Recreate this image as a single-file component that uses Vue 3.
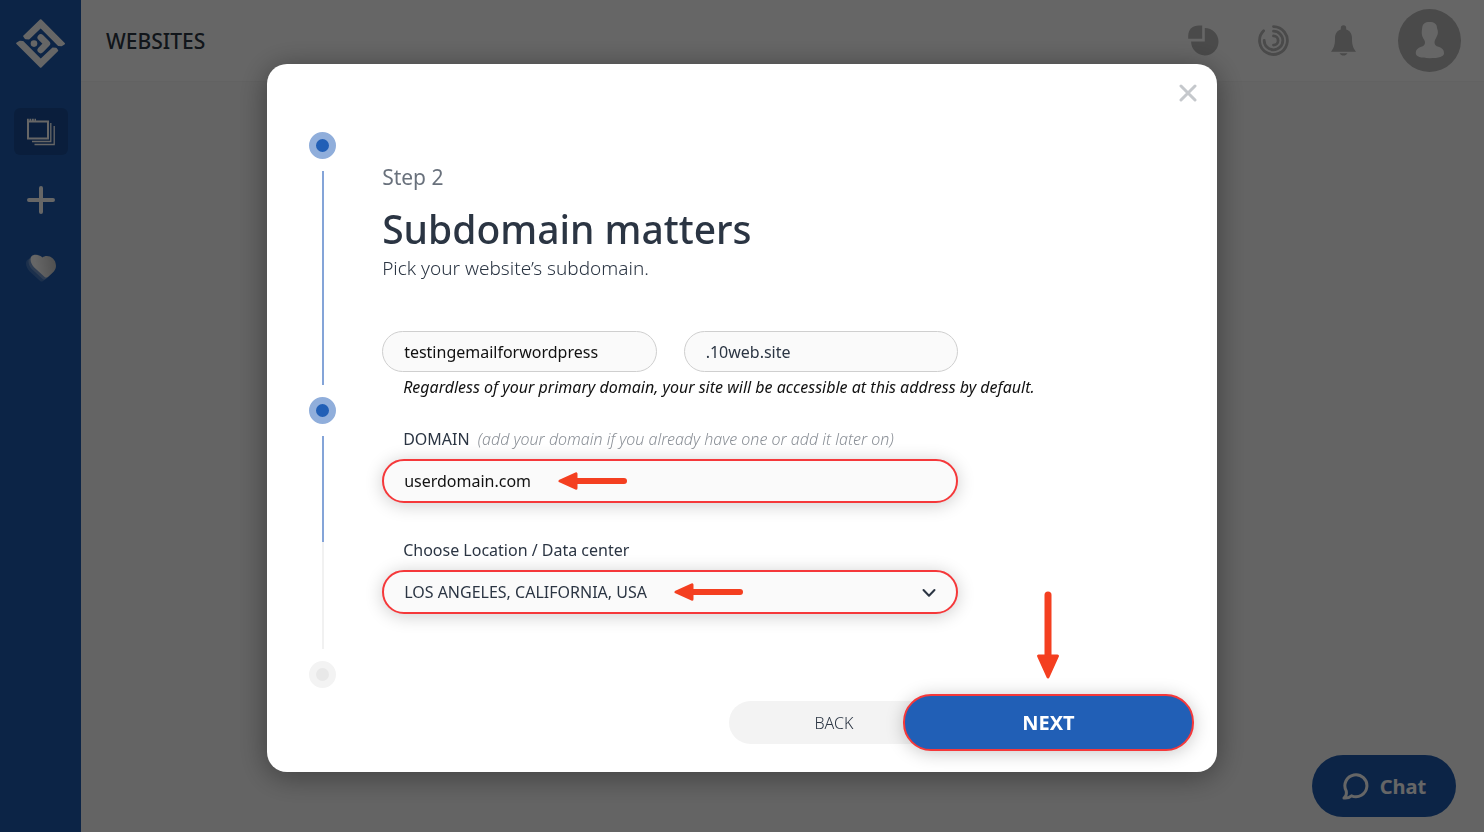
<script setup>
import { ref } from 'vue'

const subdomain = ref('testingemailforwordpress')
const suffix = ref('.10web.site')
const domain = ref('userdomain.com')
const location = ref('LOS ANGELES, CALIFORNIA, USA')
</script>

<template>
  <div class="app">
    <aside class="sidebar">
      <a class="logo" href="#" aria-label="Home">
        <svg width="50" height="50" viewBox="0 0 50 50">
          <g fill="currentColor" stroke="currentColor" stroke-width="2" stroke-linejoin="round">
            <path d="M24.7 1.2 48 24.6 45.5 26.2 42.6 26 24.7 8 13 19.4 9.6 19.2 8.2 17.2Z" />
            <path d="M24.7 47.8 1.2 24.4 3.8 22.8 6.8 23 24.7 41 36.6 29.6 40 29.8 41.2 31.6Z" />
          </g>
          <path d="M24.7 18.4 31 24.6 24.7 31" fill="none" stroke="currentColor" stroke-width="6.4" stroke-linecap="round" stroke-linejoin="round" />
          <circle cx="18" cy="24.6" r="3.3" fill="currentColor" />
        </svg>
      </a>
      <nav class="nav">
        <a class="nav-item active" href="#" aria-label="Websites">
          <svg width="28" height="28" viewBox="0 0 28 28" fill="none" stroke="currentColor">
            <path d="M1 3.500H21V20.500H1Z" stroke-width="2" />
            <path d="M0 2H9" stroke-width="2.500" stroke-dasharray="1.800 .7" />
            <path d="M23.800 5V23.500H5M27.200 8V26.500H7.500" stroke-width="1.300" />
          </svg>
        </a>
        <a class="nav-item" href="#" aria-label="Add website">
          <svg width="28" height="28" viewBox="0 0 28 28" fill="none" stroke="currentColor" stroke-width="4" stroke-linecap="round">
            <path d="M14 2V26M2 14H26" />
          </svg>
        </a>
        <a class="nav-item" href="#" aria-label="Favorites">
          <svg width="30" height="28" viewBox="0 0 30 28">
            <defs>
              <linearGradient id="heart" x1="0.200" y1="0.500" x2="1" y2="0.400">
                <stop offset="0" stop-color="#fff" />
                <stop offset="1" stop-color="#c8c8c8" />
              </linearGradient>
              <path id="heart-shape" d="M16.600 3.400C20-.1 30 2.300 30 12 30 15 28.400 17 26.500 18.800L22.400 22.600C21.300 23.800 19.800 24 18.400 22.700L8 13.200C5.500 10.900 3.600 6 5 3 6.500.2 12.200-.4 16.600 3.400Z" />
            </defs>
            <use href="#heart-shape" x="-4.500" y="4" fill="#fff" opacity=".18" />
            <use href="#heart-shape" x="-2" y="2" fill="#fff" opacity=".25" />
            <use href="#heart-shape" fill="url(#heart)" />
          </svg>
        </a>
      </nav>
    </aside>

    <div class="main">
      <header class="topbar">
        <h1>WEBSITES</h1>
        <div class="tools">
          <button type="button" aria-label="Usage">
            <svg width="31" height="31" viewBox="0 0 31 31" fill="currentColor">
              <path d="M14.200 .5V13.700H.2V11C.2 4.500 4.500 .5 11 .5Z" />
              <path d="M16.800 3A13.700 13.700 0 1 1 3.100 16.600H16.800Z" />
            </svg>
          </button>
          <button type="button" aria-label="Performance">
            <svg width="31" height="31" viewBox="0 0 31 31" fill="none" stroke="currentColor" stroke-width="2.800" stroke-linecap="round">
              <path d="M15.500 1.600A13.900 13.900 0 1 1 5.600 5.700" />
              <path d="M15.500 6.200A9.300 9.300 0 1 1 6.200 15.500" />
              <path d="M15.500 10.900A4.600 4.600 0 1 1 15.500 20.100" />
            </svg>
          </button>
          <button type="button" aria-label="Notifications">
            <svg width="31" height="31" viewBox="0 0 31 31" fill="currentColor">
              <path d="M15.500 .3C17.300 .3 18.300 1.500 18.200 3.300V4.500C22 5.500 24 9 24 13 24 19 24.500 22 28 26.800H3C6.500 22 7 19 7 13 7 9 9 5.500 12.800 4.500V3.300C12.700 1.500 13.700 .3 15.500 .3Z" />
              <path d="M11.500 28.200H19.500C18.500 29.800 17 30.600 15.500 30.600S12.500 29.800 11.500 28.200Z" />
            </svg>
          </button>
          <button type="button" aria-label="Account">
            <svg width="63" height="63" viewBox="0 0 63 63">
              <circle cx="31.500" cy="31.500" r="31.500" fill="currentColor" />
              <path d="M31.500 13C36 13 39 14.800 39 19 40.500 22.500 40 25.500 38.500 28 37.500 30 36.500 31.500 36.500 33.500 36.500 36 38 37 40.500 37.800 44 39 46.200 41 46 44.500 45.900 47.500 41 49.200 31.800 49.200S18 47.500 17.800 44.500C17.600 41 20 39 23.200 37.800 25.700 37 27 36 27 33.500 27 31.500 25.500 30 24.600 28 23.500 25.500 23.500 22.500 24.200 19 24.500 14.800 27 13 31.500 13Z" fill="#fff" />
            </svg>
          </button>
        </div>
      </header>
    </div>

    <button class="chat" type="button">
      <svg width="27" height="27" viewBox="0 0 27 27" fill="none" stroke="currentColor" stroke-width="3" stroke-linejoin="round" stroke-linecap="round">
        <path d="M4.200 17.900A11 11 0 1 1 9.500 22.800C7.500 24.500 4.500 25.300 2 25 4 23.500 4.700 20.500 4.200 17.900Z" />
      </svg>
      Chat
    </button>
  </div>

  <div class="overlay">
    <section class="modal" role="dialog" aria-modal="true" aria-labelledby="dialog-title">
      <button class="close" type="button" aria-label="Close">
        <svg width="18" height="18" viewBox="0 0 18 18" fill="none" stroke="currentColor" stroke-width="3" stroke-linecap="round">
          <path d="M2 2 16 16M16 2 2 16" />
        </svg>
      </button>

      <div class="content">
        <div class="stepper">
          <span class="dot"></span>
          <span class="line"></span>
          <span class="dot"></span>
          <span class="line half"></span>
          <span class="dot pending"></span>
        </div>

        <form id="site-form" class="form" @submit.prevent>
          <p class="step">Step 2</p>
          <h2 id="dialog-title">Subdomain matters</h2>
          <p class="lead">Pick your website’s subdomain.</p>

          <div class="pair">
            <input v-model="subdomain" class="control" type="text" aria-label="Subdomain" aria-describedby="sub-hint" />
            <input v-model="suffix" class="control dark" type="text" readonly aria-label="Domain suffix" />
          </div>
          <p id="sub-hint" class="hint">Regardless of your primary domain, your site will be accessible at this address by default.</p>

          <label class="label domain-label" for="domain">DOMAIN <em>(add your domain if you already have one or add it later on)</em></label>
          <div class="field">
            <input id="domain" v-model="domain" class="control marked" type="text" />
            <svg class="arrow arrow-domain" width="69" height="18" viewBox="0 0 69 18">
              <path d="M18 9H66" stroke="#f43f20" stroke-width="6" stroke-linecap="round" />
              <path d="M2 9 18 1.800V16.200Z" fill="#f43f20" stroke="#f43f20" stroke-width="3" stroke-linejoin="round" />
            </svg>
          </div>

          <label class="label location-label" for="location">Choose Location / Data center</label>
          <div class="field">
            <select id="location" v-model="location" class="control dark marked">
              <option>LOS ANGELES, CALIFORNIA, USA</option>
            </select>
            <svg class="chevron" width="14" height="10" viewBox="0 0 14 10" fill="none" stroke="#2b3543" stroke-width="2" stroke-linecap="round" stroke-linejoin="round">
              <path d="M1.500 2 7 7.800 12.500 2" />
            </svg>
            <svg class="arrow arrow-location" width="69" height="18" viewBox="0 0 69 18">
              <path d="M18 9H66" stroke="#f43f20" stroke-width="6" stroke-linecap="round" />
              <path d="M2 9 18 1.800V16.200Z" fill="#f43f20" stroke="#f43f20" stroke-width="3" stroke-linejoin="round" />
            </svg>
          </div>
        </form>
      </div>

      <footer class="actions">
        <button class="back" type="button">BACK</button>
        <div class="next-wrap">
          <button class="next" type="submit" form="site-form">NEXT</button>
          <svg class="arrow arrow-next" width="24" height="88" viewBox="0 0 24 88">
            <path d="M12 4V66" stroke="#f43f20" stroke-width="7" stroke-linecap="round" />
            <path d="M12 86 2.500 65H21.500Z" fill="#f43f20" stroke="#f43f20" stroke-width="3" stroke-linejoin="round" />
          </svg>
        </div>
      </footer>
    </section>
  </div>
</template>

<style>
body {
  background: #fafafa;
}
</style>

<style scoped>
.app,
.overlay {
  font-family: "Noto Sans", "Open Sans", sans-serif;
  color: #2b3543;
}

.app *,
.overlay,
.overlay * {
  box-sizing: border-box;
}

button,
input,
select {
  font: inherit;
  color: inherit;
}

button {
  border: 0;
  padding: 0;
  background: none;
  cursor: pointer;
}

svg {
  display: block;
}

h1,
h2,
p {
  margin: 0;
}

.app {
  display: flex;
  min-height: 100vh;
  background: #fafafa;
}

.sidebar {
  flex: none;
  width: 81px;
  display: flex;
  flex-direction: column;
  align-items: center;
  gap: 39px;
  padding-top: 19px;
  background: #1f5bb0;
  color: #fff;
}

.logo,
.nav-item {
  color: inherit;
}

.nav {
  display: flex;
  flex-direction: column;
  gap: 21px;
}

.nav-item {
  display: flex;
  align-items: center;
  justify-content: center;
  width: 54px;
  height: 47px;
  border-radius: 6px;
}

.nav-item.active {
  background: #1a4d96;
}

.main {
  flex: 1;
}

.topbar {
  display: flex;
  align-items: center;
  justify-content: space-between;
  height: 82px;
  padding: 0 23px 0 25px;
  background: #fff;
  border-bottom: 1px solid #f5f5f5;
}

.topbar h1 {
  font-size: 21px;
  font-weight: 500;
  line-height: 28px;
}

.tools {
  display: flex;
  align-items: center;
  gap: 39px;
}

.tools button {
  color: #b8b8b8;
}

.chat {
  position: fixed;
  right: 28px;
  bottom: 15px;
  display: flex;
  align-items: center;
  justify-content: center;
  gap: 11px;
  width: 144px;
  height: 62px;
  border-radius: 31px;
  background: #1f5bb0;
  color: #fff;
  font-size: 20px;
  font-weight: 700;
}

.overlay {
  position: fixed;
  inset: 0;
  display: flex;
  align-items: center;
  justify-content: center;
  padding-top: 4px;
  overflow: auto;
  background: rgba(0, 0, 0, 0.6);
}

.modal {
  position: relative;
  width: 64%;
  min-width: 820px;
  padding: 68px 23px 21px 42px;
  border-radius: 20px;
  background: #fff;
  box-shadow: 0 4px 30px rgba(0, 0, 0, 0.4);
}

.close {
  position: absolute;
  top: 20px;
  right: 20px;
  color: #c5c8cc;
}

.content {
  display: flex;
  gap: 46px;
}

.stepper {
  flex: none;
  display: flex;
  flex-direction: column;
  align-items: center;
  gap: 12px;
  width: 27px;
}

.dot {
  flex: none;
  width: 27px;
  height: 27px;
  border: 7px solid #90aedb;
  border-radius: 50%;
  background: #215fb6;
}

.dot.pending {
  border-color: #f3f3f3;
  background: #e8e8e8;
}

.line {
  flex: 1;
  width: 2px;
  background: #84a4d8;
}

.line.half {
  background: linear-gradient(#84a4d8 50%, #f1f1f1 50%);
}

.form {
  flex: 1;
  padding: 30px 0 74px;
}

.step {
  font-size: 21px;
  line-height: 30px;
  color: #69717c;
}

h2 {
  margin-top: 11px;
  font-size: 39px;
  font-weight: 500;
  line-height: 52px;
}

.lead {
  margin-top: 1px;
  font-size: 19px;
  font-weight: 300;
  line-height: 24px;
}

.pair {
  display: flex;
  gap: 27px;
  max-width: 576px;
  margin-top: 51px;
}

.control {
  display: block;
  width: 100%;
  min-width: 0;
  height: 41px;
  padding: 0 21px;
  border: 1px solid #cfcfcf;
  border-radius: 22px;
  outline: none;
  appearance: none;
  background: #fafafa;
  font-size: 16px;
  color: #111;
}

.control.dark {
  color: #2b3543;
}

.control.marked {
  height: 44px;
  padding: 0 20px;
  border: 2px solid #f5383a;
  box-shadow: 0 2px 18px rgba(0, 0, 0, 0.2);
}

.hint {
  margin: 3px 0 0 21px;
  font-size: 16px;
  font-style: italic;
  line-height: 24px;
  color: #111;
}

.label {
  display: block;
  margin-left: 21px;
  font-size: 16px;
  line-height: 24px;
}

.label em {
  margin-left: 4px;
  font-weight: 300;
  color: #8b9097;
}

.domain-label {
  margin-top: 28px;
}

.location-label {
  margin-top: 35px;
}

.field {
  position: relative;
  max-width: 576px;
  margin-top: 8px;
}

.chevron,
.arrow {
  position: absolute;
  pointer-events: none;
}

.chevron {
  top: 18px;
  right: 22px;
}

.arrow-domain {
  top: 13px;
  left: 176px;
}

.arrow-location {
  top: 13px;
  left: 292px;
}

.actions {
  display: flex;
  align-items: center;
  justify-content: flex-end;
  margin-top: 6px;
}

.back {
  width: 210px;
  height: 43px;
  margin-right: -36px;
  border-radius: 22px;
  background: #f3f3f3;
  font-size: 16px;
  font-weight: 300;
}

.next-wrap {
  position: relative;
}

.next {
  width: 291px;
  height: 57px;
  border: 2px solid #f5383a;
  border-radius: 28px;
  background: #215fb6;
  box-shadow: 0 2px 18px rgba(0, 0, 0, 0.22);
  color: #fff;
  font-size: 20px;
  font-weight: 700;
}

.arrow-next {
  bottom: 72px;
  left: 133px;
}
</style>
